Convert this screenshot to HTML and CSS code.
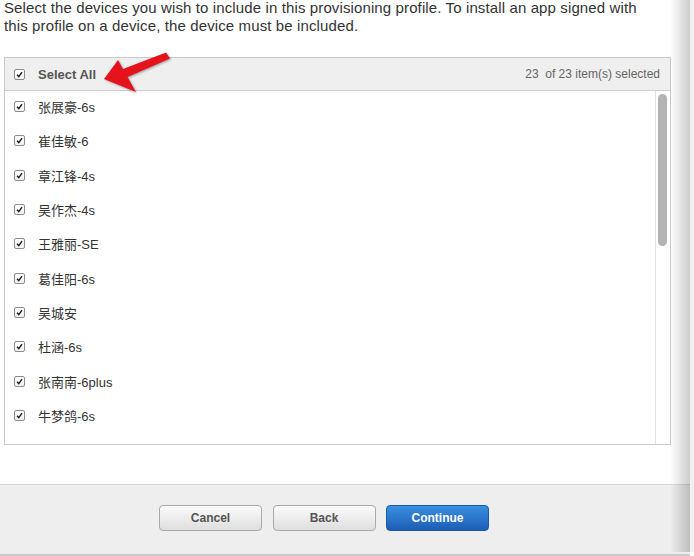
FILE: index.html
```html
<!DOCTYPE html>
<html>
<head>
<meta charset="utf-8">
<link rel="stylesheet" href="styles.css">
</head>
<body>
<div class="page">
  <div class="main">
    <p class="intro">Select the devices you wish to include in this provisioning profile. To install an app signed with this profile on a device, the device must be included.</p>
    <div class="table">
      <div class="thead">
        <label class="cell"><span class="cb"><svg viewBox="0 0 10 10"><path d="M2.3 5.2 L4.2 7.3 L7.8 2.4" /></svg></span><span class="all">Select All</span></label>
        <span class="count">23&nbsp;&nbsp;of 23 item(s) selected</span>
      </div>
      <div class="tbody">
        <ul class="rows">
          <li class="row"><span class="cb"><svg viewBox="0 0 10 10"><path d="M2.3 5.2 L4.2 7.3 L7.8 2.4" /></svg></span>张展豪-6s</li>
          <li class="row"><span class="cb"><svg viewBox="0 0 10 10"><path d="M2.3 5.2 L4.2 7.3 L7.8 2.4" /></svg></span>崔佳敏-6</li>
          <li class="row"><span class="cb"><svg viewBox="0 0 10 10"><path d="M2.3 5.2 L4.2 7.3 L7.8 2.4" /></svg></span>章江锋-4s</li>
          <li class="row"><span class="cb"><svg viewBox="0 0 10 10"><path d="M2.3 5.2 L4.2 7.3 L7.8 2.4" /></svg></span>吴作杰-4s</li>
          <li class="row"><span class="cb"><svg viewBox="0 0 10 10"><path d="M2.3 5.2 L4.2 7.3 L7.8 2.4" /></svg></span>王雅丽-SE</li>
          <li class="row"><span class="cb"><svg viewBox="0 0 10 10"><path d="M2.3 5.2 L4.2 7.3 L7.8 2.4" /></svg></span>葛佳阳-6s</li>
          <li class="row"><span class="cb"><svg viewBox="0 0 10 10"><path d="M2.3 5.2 L4.2 7.3 L7.8 2.4" /></svg></span>吴城安</li>
          <li class="row"><span class="cb"><svg viewBox="0 0 10 10"><path d="M2.3 5.2 L4.2 7.3 L7.8 2.4" /></svg></span>杜涵-6s</li>
          <li class="row"><span class="cb"><svg viewBox="0 0 10 10"><path d="M2.3 5.2 L4.2 7.3 L7.8 2.4" /></svg></span>张南南-6plus</li>
          <li class="row"><span class="cb"><svg viewBox="0 0 10 10"><path d="M2.3 5.2 L4.2 7.3 L7.8 2.4" /></svg></span>牛梦鸽-6s</li>
        </ul>
        <div class="track"><div class="thumb"></div></div>
      </div>
    </div>
    <div class="footer">
      <button class="btn">Cancel</button>
      <button class="btn">Back</button>
      <button class="btn primary">Continue</button>
    </div>
  </div>
  <div class="edge"></div>
  <svg class="arrow" width="694" height="120" viewBox="0 0 694 120">
    <path d="M104 79 L118 60 L123 69 L166 52.5 L170 58.5 L127.5 77 L136 92 Z" />
  </svg>
</div>
</body>
</html>
```
FILE: styles.css
```css
html, body {
  margin: 0;
  padding: 0;
  background: #ffffff;
}
body {
  width: 694px;
  height: 556px;
  overflow: hidden;
  font-family: "Liberation Sans", "Noto Sans CJK SC", sans-serif;
}
.page {
  position: relative;
  display: flex;
  width: 694px;
  height: 556px;
}
.main {
  position: relative;
  width: 690px;
  display: flex;
  flex-direction: column;
}
.main::after {
  content: "";
  position: absolute;
  top: 0;
  right: 0;
  width: 20px;
  height: 552px;
  background: linear-gradient(to right, rgba(0,0,0,0), rgba(0,0,0,0.2));
  pointer-events: none;
}
.edge {
  width: 4px;
  height: 552px;
  background: #f0f0f0;
}
.intro {
  margin: -1px 0 0 4px;
  width: 648px;
  font-family: "Liberation Sans", sans-serif;
  font-size: 15px;
  line-height: 18px;
  letter-spacing: 0.12px;
  color: #333333;
}
.table {
  margin: 22px 0 0 4px;
  width: 665px;
  border: 1px solid #c9c9c9;
  display: flex;
  flex-direction: column;
}
.thead {
  height: 32px;
  background: #efefef;
  border-bottom: 1px solid #cfcfcf;
  display: flex;
  align-items: center;
  justify-content: space-between;
  padding: 0 10px 0 9px;
}
.cell {
  display: flex;
  align-items: center;
}
.cb {
  width: 9px;
  height: 9px;
  border: 1px solid #8c8c8c;
  border-radius: 2px;
  background: linear-gradient(#ffffff, #f1f1f1);
  margin-right: 13px;
  display: flex;
}
.cb svg {
  width: 9px;
  height: 9px;
}
.cb path {
  fill: none;
  stroke: #1e1e1e;
  stroke-width: 1.6;
}
.all {
  font-weight: bold;
  font-size: 13px;
  color: #555555;
}
.count {
  font-size: 12px;
  color: #666666;
}
.tbody {
  height: 353px;
  display: flex;
  overflow: hidden;
}
.rows {
  list-style: none;
  margin: 0;
  padding: 0 0 0 9px;
  flex: 1;
}
.row {
  height: 34.33px;
  display: flex;
  align-items: center;
  font-size: 13px;
  color: #333333;
  margin-top: -1.5px;
  margin-bottom: 1.5px;
}
.track {
  width: 15px;
  border-left: 1px solid #e2e2e2;
  padding: 3px 0 0 2px;
  box-sizing: border-box;
}
.thumb {
  width: 9px;
  height: 152px;
  border-radius: 5px;
  background: #b3b3b3;
}
.footer {
  margin-top: 39px;
  height: 66px;
  border-top: 1px solid #d9d9d9;
  border-bottom: 2px solid #cacaca;
  background: #eeeeee;
  display: flex;
  align-items: flex-start;
  gap: 10.5px;
  padding: 20px 0 0 159px;
}
.btn {
  width: 103px;
  height: 26px;
  border: 1px solid #a9a9a9;
  border-radius: 4px;
  background: linear-gradient(#fbfbfb, #dedede);
  font-family: "Liberation Sans", sans-serif;
  font-weight: bold;
  font-size: 12px;
  color: #555555;
  padding: 0;
}
.btn.primary {
  border-color: #1b5aa8;
  background: linear-gradient(#3a8fe2, #1c5db4);
  color: #ffffff;
}
.arrow {
  position: absolute;
  left: 0;
  top: 0;
  pointer-events: none;
}
.arrow path {
  fill: #e5141c;
  filter: drop-shadow(1px 1px 1px rgba(0,0,0,0.35));
}
```
